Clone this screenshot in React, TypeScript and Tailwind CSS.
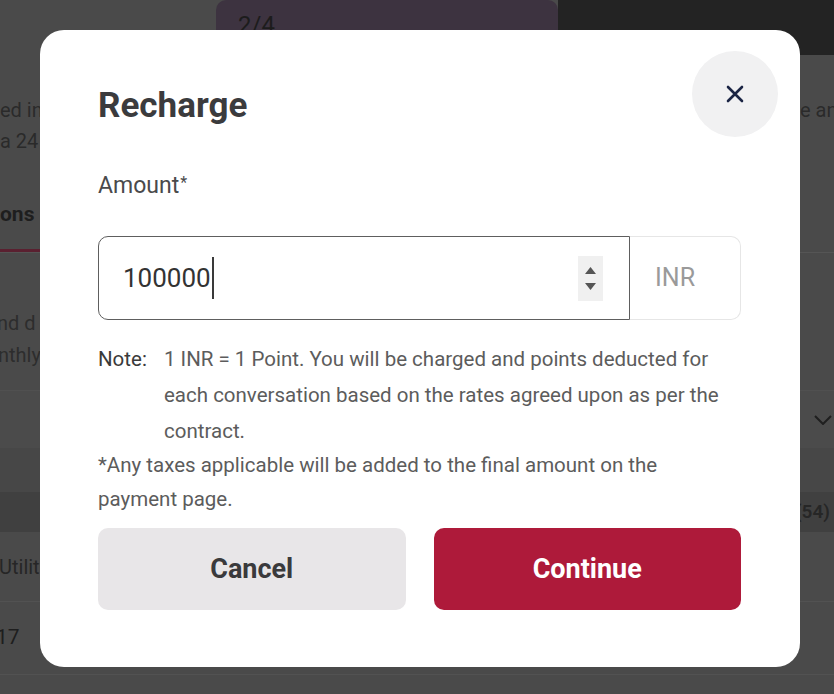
import React from "react";

const font = { fontFamily: "Roboto, 'Noto Sans', sans-serif" };

function BgPage() {
  return (
    <div className="flex flex-col w-full h-[694px] bg-[#4a4a4a] text-[#2a2a2a] overflow-hidden" style={font}>
      {/* header */}
      <div className="flex h-[55px] shrink-0">
        <div className="w-[216px] shrink-0" />
        <div className="w-[342px] h-[30px] shrink-0 bg-[#3d3340] rounded-t-[10px] pl-[22px] pt-[10px] text-[24px] leading-[30px] text-[#1c1c1c] overflow-visible">
          2/4
        </div>
        <div className="flex-1 h-[55px] bg-[#232323]" />
      </div>
      {/* paragraph */}
      <div className="flex justify-between h-[125px] pt-[40px] text-[20px] leading-[31px] shrink-0">
        <div className="whitespace-nowrap">
          <div>ed in the</div>
          <div>a 24 hour</div>
        </div>
        <div className="w-[34px] overflow-hidden whitespace-nowrap">
          <div>e and</div>
        </div>
      </div>
      {/* tabs */}
      <div className="flex h-[73px] border-b border-[#555555] shrink-0">
        <div className="w-[40px] border-b-[3px] border-[#5a2030] pt-[19px] text-[21px] font-bold leading-[30px] text-[#1e1e1e] whitespace-nowrap overflow-visible">
          ons
        </div>
      </div>
      {/* description */}
      <div className="h-[137px] pt-[54px] text-[20px] leading-[32px] whitespace-nowrap shrink-0 text-[#2d2d2d]">
        <div className="-ml-[3px]">nd d</div>
        <div className="-ml-[2px]">nthly</div>
      </div>
      {/* accordion row */}
      <div className="flex justify-end items-center h-[58px] border-t border-[#505050] bg-[#4b4b4b] pr-[2px] shrink-0">
        <svg width="18" height="10" viewBox="0 0 18 10" fill="none">
          <path d="M1 1l8 8 8-8" stroke="#1f1f1f" strokeWidth="2" />
        </svg>
      </div>
      <div className="h-[44px] bg-[#474747] shrink-0" />
      {/* table header */}
      <div className="flex justify-end items-center h-[40px] bg-[#404040] pr-[4px] text-[19px] text-[#262626] font-semibold shrink-0">
        (54)
      </div>
      {/* rows */}
      <div className="flex items-center h-[70px] border-b border-[#525252] text-[20px] text-[#262626] shrink-0 whitespace-nowrap">
        <span className="-ml-[1px]">Utility</span>
      </div>
      <div className="flex items-center h-[73px] border-b border-[#525252] text-[21px] text-[#1e1e1e] shrink-0 whitespace-nowrap">
        <span className="-ml-[4px]">17</span>
      </div>
      <div className="flex-1" />
    </div>
  );
}

function Modal() {
  return (
    <div
      className="absolute left-[40px] top-[30px] w-[760px] h-[637px] bg-white rounded-[24px] pl-[58px] pr-[59px] pt-[56px]"
      style={font}
    >
      <button className="absolute right-[22px] top-[21px] w-[86px] h-[86px] rounded-full bg-[#f1f1f2] flex items-center justify-center">
        <svg width="18" height="18" viewBox="0 0 18 18" fill="none">
          <path d="M2 2l14 14M16 2L2 16" stroke="#1b2544" strokeWidth="2.6" strokeLinecap="round" />
        </svg>
      </button>
      <h2 className="text-[35px] leading-[40px] font-bold text-[#3b3b3d]">Recharge</h2>
      <div className="mt-[45px] text-[23px] leading-[30px] text-[#4a4a4c]">
        Amount<sup className="text-[16px] relative -top-[5px] ml-[1px]">*</sup>
      </div>
      <div className="mt-[35px] flex h-[84px]">
        <div className="flex-1 flex items-center border border-[#5e5e5e] rounded-l-[10px] pl-[24px] pr-[26px]">
          <div className="flex items-center flex-1">
            <span className="text-[26px] text-[#333333] leading-none">100000</span>
            <span className="w-[2px] h-[42px] bg-[#3a3a3a] ml-[1px]" />
          </div>
          <div className="w-[25px] h-[45px] bg-[#f0f0f0] flex flex-col items-center justify-center gap-[9px]">
            <svg width="11" height="7" viewBox="0 0 11 7">
              <path d="M5.5 0L11 7H0z" fill="#555555" />
            </svg>
            <svg width="11" height="7" viewBox="0 0 11 7">
              <path d="M0 0h11L5.5 7z" fill="#555555" />
            </svg>
          </div>
        </div>
        <div className="w-[111px] flex items-center pl-[25px] border border-l-0 border-[#e6e6e6] rounded-r-[10px] text-[25px] text-[#9a9a9a]">
          INR
        </div>
      </div>
      <div className="mt-[21px] flex text-[20.5px] leading-[36px] text-[#5c5c5c]">
        <span className="w-[66px] shrink-0 text-[#3a3a3a]">Note:</span>
        <span>
          1 INR = 1 Point. You will be charged and points deducted for each conversation based on the rates agreed upon as per the
          contract.
        </span>
      </div>
      <div className="-mt-[1px] text-[20.5px] leading-[34px] text-[#5c5c5c]">
        *Any taxes applicable will be added to the final amount on the payment page.
      </div>
      <div className="mt-[12px] flex gap-[28px]">
        <button className="flex-1 h-[82px] rounded-[10px] bg-[#e8e6e8] text-[27px] font-bold text-[#3a3a3c]">
          Cancel
        </button>
        <button className="flex-1 h-[82px] rounded-[10px] bg-[#ae1a3a] text-[27px] font-bold text-white">
          Continue
        </button>
      </div>
    </div>
  );
}

export default function App() {
  return (
    <div className="relative w-full h-[694px] overflow-hidden">
      <BgPage />
      <Modal />
    </div>
  );
}
